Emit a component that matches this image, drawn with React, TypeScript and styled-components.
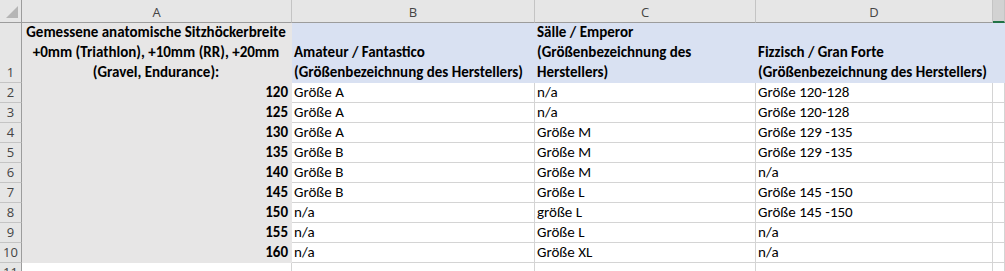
import { Fragment } from 'react';
import styled, { createGlobalStyle } from 'styled-components';

const GlobalStyle = createGlobalStyle`
	html, body {
		margin: 0;
		padding: 0;
		background: #fff;
		overflow: hidden;
	}
	body {
		font-family: Carlito, Lato, 'Liberation Sans', sans-serif;
		color: #000;
	}
`;

const palette = {
	grid: '#d4d4d4',
	header: '#e6e6e6',
	headerSelected: '#d2d2d2',
	headerLine: '#c4c4c4',
	headerEdge: '#9c9c9c',
	grey: '#e7e6e6',
	blue: '#d9e1f2',
	green: '#217346',
};

const Sheet = styled.div`
	display: grid;
	grid-template-columns: 22px 270px 243px 221px 237px 1fr;
	grid-template-rows: 23px 60px repeat(10, 20px) 20px;
	width: 1005px;
	height: 271px;
	overflow: hidden;
	font-size: 15px;
`;

const Corner = styled.div`
	background: ${palette.header};
	border-right: 1px solid ${palette.headerEdge};
	border-bottom: 1px solid ${palette.headerEdge};
	display: flex;
	align-items: flex-end;
	justify-content: flex-end;
	padding: 0 3px 4px 0;
	box-sizing: border-box;
`;

const ColHeader = styled.div<{ $selected?: boolean }>`
	box-sizing: border-box;
	background: ${(p) => (p.$selected ? palette.headerSelected : palette.header)};
	border-right: 1px solid ${palette.headerLine};
	border-bottom: ${(p) =>
		p.$selected
			? `2px solid ${palette.green}`
			: `1px solid ${palette.headerEdge}`};
	color: #444;
	font-family: 'Open Sans', 'Liberation Sans', sans-serif;
	font-size: 13px;
	display: flex;
	align-items: center;
	justify-content: center;
	padding-top: 1px;
`;

const RowHeader = styled.div`
	box-sizing: border-box;
	background: ${palette.header};
	border-right: 1px solid ${palette.headerEdge};
	border-bottom: 1px solid ${palette.headerLine};
	color: #444;
	font-family: 'Open Sans', 'Liberation Sans', sans-serif;
	font-size: 13px;
	display: flex;
	align-items: flex-end;
	justify-content: center;
	line-height: 19px;
`;

type Fill = 'none' | 'grey' | 'blue';

const fillColor = (f: Fill) =>
	f === 'grey' ? palette.grey : f === 'blue' ? palette.blue : '#fff';

const Cell = styled.div<{
	$fill: Fill;
	$align?: 'left' | 'center' | 'right';
	$bold?: boolean;
}>`
	box-sizing: border-box;
	background: ${(p) => fillColor(p.$fill)};
	border-right: 1px solid
		${(p) => (p.$fill === 'none' ? palette.grid : fillColor(p.$fill))};
	border-bottom: 1px solid
		${(p) => (p.$fill === 'none' ? palette.grid : fillColor(p.$fill))};
	display: flex;
	flex-direction: column;
	justify-content: flex-end;
	text-align: ${(p) => p.$align || 'left'};
	font-weight: ${(p) => (p.$bold ? 700 : 400)};
	padding: 0 3px 0 2px;
	line-height: 20px;
	white-space: nowrap;
	overflow: hidden;
`;

const headerA = [
	'Gemessene anatomische Sitzhöckerbreite',
	'+0mm (Triathlon), +10mm (RR), +20mm',
	'(Gravel, Endurance):',
];

const headers = [
	['Amateur / Fantastico', '(Größenbezeichnung des Herstellers)'],
	['Sälle / Emperor', '(Größenbezeichnung des', 'Herstellers)'],
	['Fizzisch / Gran Forte', '(Größenbezeichnung des Herstellers)'],
];

const rows: [number, string, string, string][] = [
	[120, 'Größe A', 'n/a', 'Größe 120-128'],
	[125, 'Größe A', 'n/a', 'Größe 120-128'],
	[130, 'Größe A', 'Größe M', 'Größe 129 -135'],
	[135, 'Größe B', 'Größe M', 'Größe 129 -135'],
	[140, 'Größe B', 'Größe M', 'n/a'],
	[145, 'Größe B', 'Größe L', 'Größe 145 -150'],
	[150, 'n/a', 'größe L', 'Größe 145 -150'],
	[155, 'n/a', 'Größe L', 'n/a'],
	[160, 'n/a', 'Größe XL', 'n/a'],
];

const Lines = ({ lines }: { lines: string[] }) => (
	<>
		{lines.map((l) => (
			<div key={l}>{l}</div>
		))}
	</>
);

export default function App() {
	return (
		<>
			<GlobalStyle />
			<Sheet>
				<Corner>
					<svg width="12" height="12" viewBox="0 0 12 12">
						<polygon points="12,0 12,12 0,12" fill="#b5b5b5" />
					</svg>
				</Corner>
				{['A', 'B', 'C', 'D'].map((c) => (
					<ColHeader key={c}>{c}</ColHeader>
				))}
				<ColHeader $selected />

				<RowHeader>1</RowHeader>
				<Cell $fill="grey" $align="center" $bold>
					<Lines lines={headerA} />
				</Cell>
				{headers.map((h) => (
					<Cell key={h[0]} $fill="blue" $bold>
						<Lines lines={h} />
					</Cell>
				))}
				<Cell $fill="blue" />

				{rows.map(([n, b, c, d], i) => (
					<Fragment key={n}>
						<RowHeader>{i + 2}</RowHeader>
						<Cell $fill="grey" $align="right" $bold>
							{n}
						</Cell>
						<Cell $fill="none">{b}</Cell>
						<Cell $fill="none">{c}</Cell>
						<Cell $fill="none">{d}</Cell>
						<Cell $fill="none" />
					</Fragment>
				))}

				<RowHeader>11</RowHeader>
				<Cell $fill="none" />
				<Cell $fill="none" />
				<Cell $fill="none" />
				<Cell $fill="none" />
				<Cell $fill="none" />
			</Sheet>
		</>
	);
}
